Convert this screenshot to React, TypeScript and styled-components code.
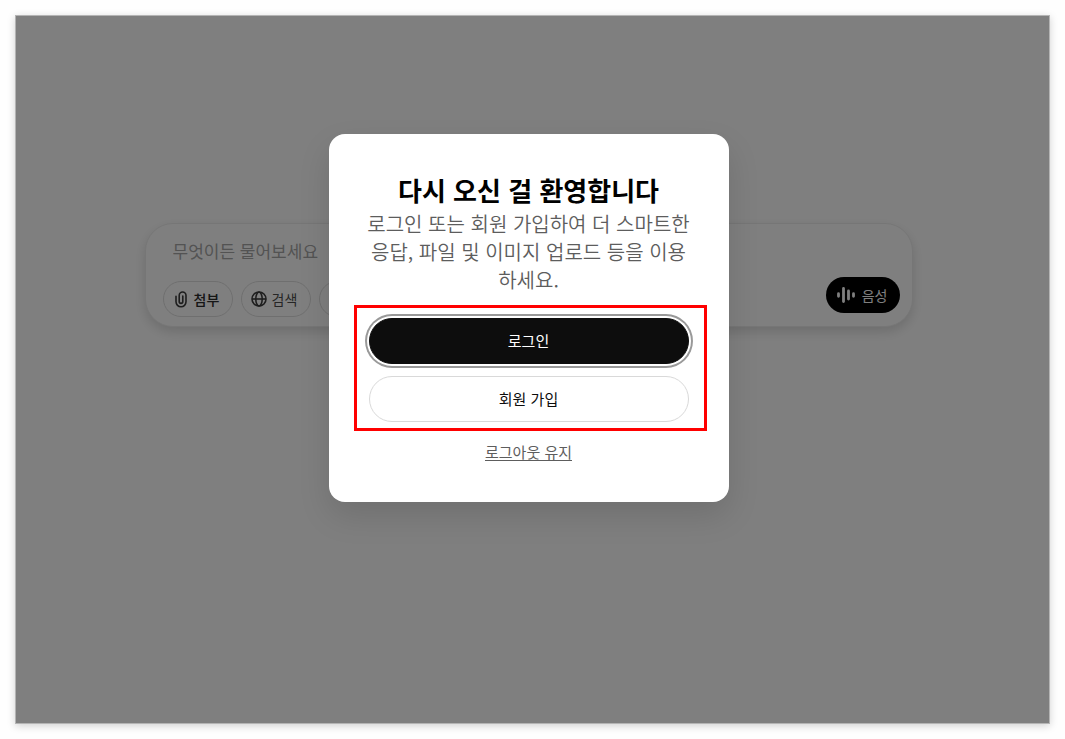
import React from "react";
import styled, { createGlobalStyle } from "styled-components";

const GlobalStyle = createGlobalStyle`
  *, *::before, *::after { box-sizing: border-box; }
  html, body { margin: 0; background: #fefefe; }
  body, button, input {
    font-family: "Noto Sans CJK KR", "Noto Sans", sans-serif;
  }
`;

const Page = styled.div`
  min-height: 100vh;
  padding: 15px;
  display: flex;
`;

const Screen = styled.div`
  position: relative;
  flex: 1;
  border: 1px solid #b4b4b4;
  background: #fff;
  box-shadow: 0 2px 8px rgba(0, 0, 0, 0.18);
`;

const Main = styled.main`
  display: flex;
  justify-content: center;
  padding: 207px 8px 0 0;
`;

const Composer = styled.form`
  width: 100%;
  max-width: 768px;
  padding: 10px 12px 9px 17px;
  border: 1px solid #ededed;
  border-radius: 28px;
  background: #fff;
  box-shadow: 0 5px 12px rgba(0, 0, 0, 0.14);
`;

const Prompt = styled.input`
  display: block;
  width: 100%;
  height: 32px;
  margin-bottom: 11px;
  padding: 0 10px;
  border: 0;
  outline: 0;
  background: transparent;
  font-size: 17px;
  &::placeholder { color: #a6a6a6; opacity: 1; }
`;

const Tools = styled.div`
  display: flex;
  height: 40px;
  gap: 8px;
`;

const Chip = styled.button<{ $strong?: boolean }>`
  display: flex;
  align-items: center;
  align-self: flex-end;
  gap: 5px;
  height: 36px;
  min-width: 70px;
  padding: 0 9px 1px;
  border: 1px solid #dedede;
  border-radius: 18px;
  background: transparent;
  color: ${(p) => (p.$strong ? "#2c2c2c" : "#4d4d4d")};
  font-size: 14px;
  font-weight: ${(p) => (p.$strong ? 500 : 400)};
  white-space: nowrap;
  svg { flex: none; color: #3c3c3c; }
`;

const VoiceButton = styled.button`
  display: flex;
  align-items: center;
  gap: 6px;
  height: 36px;
  margin-left: auto;
  padding: 0 12px 1px 10px;
  border: 0;
  border-radius: 18px;
  background: #000;
  color: #fff;
  font-size: 14px;
  font-weight: 400;
  white-space: nowrap;
`;

const Backdrop = styled.div`
  position: absolute;
  inset: 0;
  display: flex;
  justify-content: center;
  align-items: flex-start;
  padding: 118px 8px 0 0;
  background: rgba(0, 0, 0, 0.5);
`;

const Dialog = styled.section`
  display: flex;
  flex-direction: column;
  align-items: center;
  width: 400px;
  max-width: 100%;
  padding: 40px;
  border-radius: 16px;
  background: #fff;
  text-align: center;
  box-shadow: 0 14px 32px rgba(0, 0, 0, 0.12);
`;

const Title = styled.h2`
  margin: 0 0 4px;
  color: #000;
  font-size: 26px;
  font-weight: 700;
  line-height: 32px;
  white-space: nowrap;
`;

const Lead = styled.p`
  margin: 0 0 24px;
  color: #5d5d5d;
  font-size: 20px;
  font-weight: 350;
  line-height: 28px;
  white-space: nowrap;
`;

const Actions = styled.div`
  position: relative;
  display: flex;
  flex-direction: column;
  gap: 12px;
  width: 100%;
  margin-bottom: 20px;
  &::after {
    content: "";
    position: absolute;
    inset: -13px -18px -9px -15px;
    border: 3px solid #f00;
    pointer-events: none;
  }
`;

const ActionButton = styled.button<{ $primary?: boolean }>`
  height: 46px;
  padding: 0 0 2px;
  border: 1px solid ${(p) => (p.$primary ? "#0d0d0d" : "#d9d9d9")};
  border-radius: 23px;
  background: ${(p) => (p.$primary ? "#0d0d0d" : "#fff")};
  color: ${(p) => (p.$primary ? "#fff" : "#0d0d0d")};
  font-size: 15px;
  box-shadow: ${(p) => (p.$primary ? "0 0 0 2px #fff, 0 0 0 4px #999" : "none")};
`;

const StayLink = styled.a`
  color: #5d5d5d;
  font-size: 15px;
  line-height: 20px;
  text-underline-offset: 2px;
`;

const PaperclipIcon = () => (
  <svg width="16" height="18" viewBox="-1 0 16 18" fill="none" stroke="currentColor" strokeWidth="1.6" strokeLinecap="round" aria-hidden="true">
    <path d="M2 6.2v5.6a5 5 0 0 0 10 0V5.4a3.4 3.4 0 0 0-6.8 0v6.2a1.8 1.8 0 0 0 3.6 0V6" />
  </svg>
);

const GlobeIcon = () => (
  <svg width="16" height="16" viewBox="0 0 16 16" fill="none" stroke="currentColor" strokeWidth="1.6" aria-hidden="true">
    <circle cx="8" cy="8" r="7" />
    <ellipse cx="8" cy="8" rx="3.2" ry="7" />
    <path d="M1 8h14" />
  </svg>
);

const VoiceIcon = () => (
  <svg width="20" height="18" viewBox="0 0 20 18" fill="none" stroke="currentColor" strokeWidth="2.8" strokeLinecap="round" aria-hidden="true">
    <path d="M2.5 7.7v2.6M7.5 2.4v13.2M12.5 5v8M17.5 7.7v2.6" />
  </svg>
);

export default function App() {
  return (
    <Page lang="ko">
      <GlobalStyle />
      <Screen>
        <Main>
          <Composer>
            <Prompt type="text" placeholder="무엇이든 물어보세요" aria-label="무엇이든 물어보세요" />
            <Tools>
              <Chip type="button" $strong><PaperclipIcon />첨부</Chip>
              <Chip type="button"><GlobeIcon />검색</Chip>
              <Chip type="button" aria-label="더 보기" />
              <VoiceButton type="button"><VoiceIcon />음성</VoiceButton>
            </Tools>
          </Composer>
        </Main>
        <Backdrop>
          <Dialog role="dialog" aria-modal="true" aria-labelledby="welcome-title">
            <Title id="welcome-title">다시 오신 걸 환영합니다</Title>
            <Lead>
              로그인 또는 회원 가입하여 더 스마트한<br />
              응답, 파일 및 이미지 업로드 등을 이용<br />
              하세요.
            </Lead>
            <Actions>
              <ActionButton type="button" $primary>로그인</ActionButton>
              <ActionButton type="button">회원 가입</ActionButton>
            </Actions>
            <StayLink href="#">로그아웃 유지</StayLink>
          </Dialog>
        </Backdrop>
      </Screen>
    </Page>
  );
}
